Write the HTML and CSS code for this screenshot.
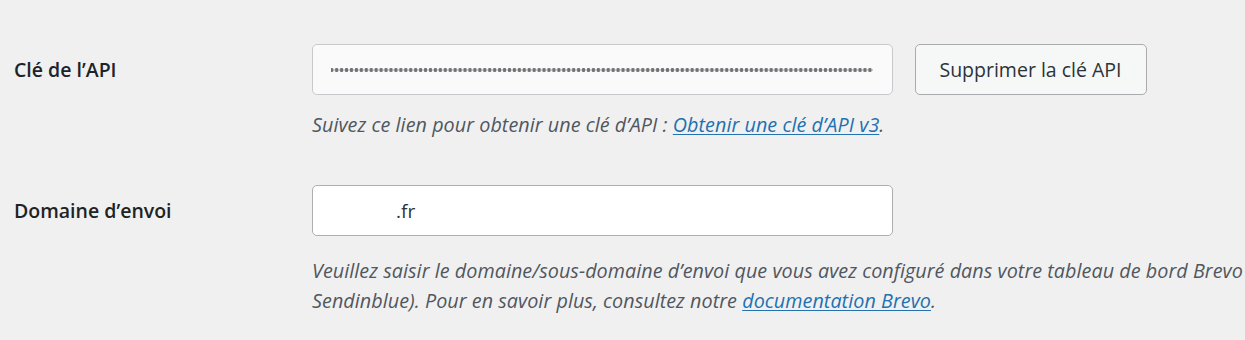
FILE: index.html
```html
<!DOCTYPE html>
<html lang="fr">
<head>
<meta charset="utf-8">
<title>Réglages Brevo</title>
<link rel="stylesheet" href="styles.css">
</head>
<body>
<form class="settings">
  <div class="row">
    <label class="label" for="api-key">Clé de l’API</label>
    <div class="field">
      <div class="controls">
        <input id="api-key" class="input input-key" type="text" readonly aria-label="Clé de l’API (masquée)">
        <button type="button" class="button">Supprimer la clé API</button>
      </div>
      <p class="description desc-key">Suivez ce lien pour obtenir une clé d’API : <a href="#">Obtenir une clé d’API v3</a>.</p>
    </div>
  </div>
  <div class="row row-domain">
    <label class="label" for="domain">Domaine d’envoi</label>
    <div class="field">
      <div class="controls">
        <input id="domain" class="input input-domain" type="text" value=".fr">
      </div>
      <p class="description desc-domain"><span class="line">Veuillez saisir le domaine/sous-domaine d’envoi que vous avez configuré dans votre tableau de bord Brevo (anciennement</span><br><span class="line">Sendinblue). Pour en savoir plus, consultez notre <a href="#">documentation Brevo</a>.</span></p>
    </div>
  </div>
</form>
</body>
</html>
```

FILE: styles.css
```css
html, body {
  margin: 0;
  padding: 0;
  background: #f0f0f1;
  overflow: hidden;
}

body {
  font-family: "Open Sans", "Noto Sans", sans-serif;
  color: #1d2327;
}

.settings {
  padding-top: 44px;
}

.row {
  display: grid;
  grid-template-columns: 312px 1fr;
}

.row-domain {
  margin-top: 45px;
}

.label {
  padding-left: 14px;
  height: 51px;
  display: flex;
  align-items: center;
  font-size: 19.5px;
  font-weight: 600;
  color: #1d2327;
}

.field {
  min-width: 0;
  overflow: hidden;
}

.controls {
  display: flex;
  align-items: center;
  gap: 21.5px;
}

.input {
  box-sizing: border-box;
  width: 581px;
  height: 51px;
  margin: 0;
  border: 1.5px solid #b9bbbf;
  border-radius: 5px;
  background: #ffffff;
  font-family: inherit;
  font-size: 19px;
  color: #2c3338;
  padding: 0 16px;
  outline: none;
}

.input-key {
  border-color: #c8c9cc;
  background:
    radial-gradient(circle at 50% 50%, #707276 1.7px, rgba(112, 114, 118, 0) 2.2px) 18px 50% / 4.95px 6px repeat-x content-box,
    #fafafa;
  padding: 0 19px 0 18px;
}

.input-domain {
  text-indent: 67px;
  border-color: #acaeb2;
}

.button {
  box-sizing: border-box;
  height: 51px;
  width: 232px;
  margin: 0;
  padding: 0;
  border: 1.5px solid #a9abae;
  border-radius: 5px;
  background: #f6f7f7;
  font-family: inherit;
  font-size: 19.5px;
  font-weight: 500;
  color: #2c3338;
  cursor: pointer;
}

.description {
  margin: 0;
  font-size: 19.75px;
  font-style: italic;
  line-height: 30px;
  letter-spacing: 0.05px;
  color: #50575e;
  white-space: nowrap;
}

.desc-key {
  margin-top: 15px;
}

.desc-domain {
  margin-top: 20px;
}

.description a {
  color: #2271b1;
  text-decoration: underline;
  text-underline-offset: 2px;
}
```
